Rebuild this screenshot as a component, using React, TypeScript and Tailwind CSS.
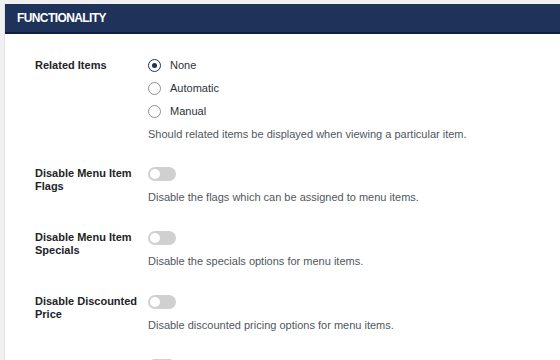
const font = { fontFamily: '"Liberation Sans", Arial, sans-serif' };

function Radio({ label, checked }: { label: string; checked?: boolean }) {
  return (
    <label className="flex items-center h-[23px] gap-[9px] text-[11px] text-[#2c3338]">
      <span
        className={
          checked
            ? "w-[13px] h-[13px] rounded-full border-[1.5px] border-[#1e3158] grid place-items-center bg-white"
            : "w-[13px] h-[13px] rounded-full border border-[#8c8f94] bg-white"
        }
      >
        {checked && <span className="w-[5px] h-[5px] rounded-full bg-[#1e3158]" />}
      </span>
      {label}
    </label>
  );
}

function Toggle() {
  return (
    <div className="w-[28px] h-[14px] rounded-full bg-[#d0d0d0] flex items-center px-[2px]">
      <span className="w-[10px] h-[10px] rounded-full bg-white" />
    </div>
  );
}

function ToggleRow({ label, desc }: { label: string; desc: string }) {
  return (
    <div className="grid grid-cols-[113px_1fr] mb-[27px]">
      <div className="w-[108px] text-[11px] leading-[13px] font-bold text-[#1d2327]">{label}</div>
      <div>
        <Toggle />
        <p className="mt-[10px] text-[11px] leading-[13px] text-[#50575e]">{desc}</p>
      </div>
    </div>
  );
}

export default function App() {
  return (
    <div className="w-[560px] h-[360px] overflow-hidden bg-[#f0f0f1] pt-[4px] pl-[4px]" style={font}>
      <div className="h-full bg-white border-l border-[#e2e2e4]">
        {/* Section header */}
        <div className="h-[30px] bg-[#1f3259] border-b-2 border-[#111d45] flex items-center pl-[12px]">
          <h2 className="text-[12px] font-bold text-white tracking-tighter">FUNCTIONALITY</h2>
        </div>

        <div className="pl-[30px] pt-[20px]">
          {/* Related items */}
          <div className="grid grid-cols-[113px_1fr] mb-[26px]">
            <div className="h-[23px] flex items-center text-[11px] font-bold text-[#1d2327]">Related Items</div>
            <div>
              <Radio label="None" checked />
              <Radio label="Automatic" />
              <Radio label="Manual" />
              <p className="mt-[5px] text-[11px] leading-[13px] text-[#50575e]">
                Should related items be displayed when viewing a particular item.
              </p>
            </div>
          </div>

          <ToggleRow label="Disable Menu Item Flags" desc="Disable the flags which can be assigned to menu items." />
          <ToggleRow label="Disable Menu Item Specials" desc="Disable the specials options for menu items." />
          <ToggleRow label="Disable Discounted Price" desc="Disable discounted pricing options for menu items." />
          <div className="grid grid-cols-[113px_1fr]">
            <div />
            <Toggle />
          </div>
        </div>
      </div>
    </div>
  );
}
